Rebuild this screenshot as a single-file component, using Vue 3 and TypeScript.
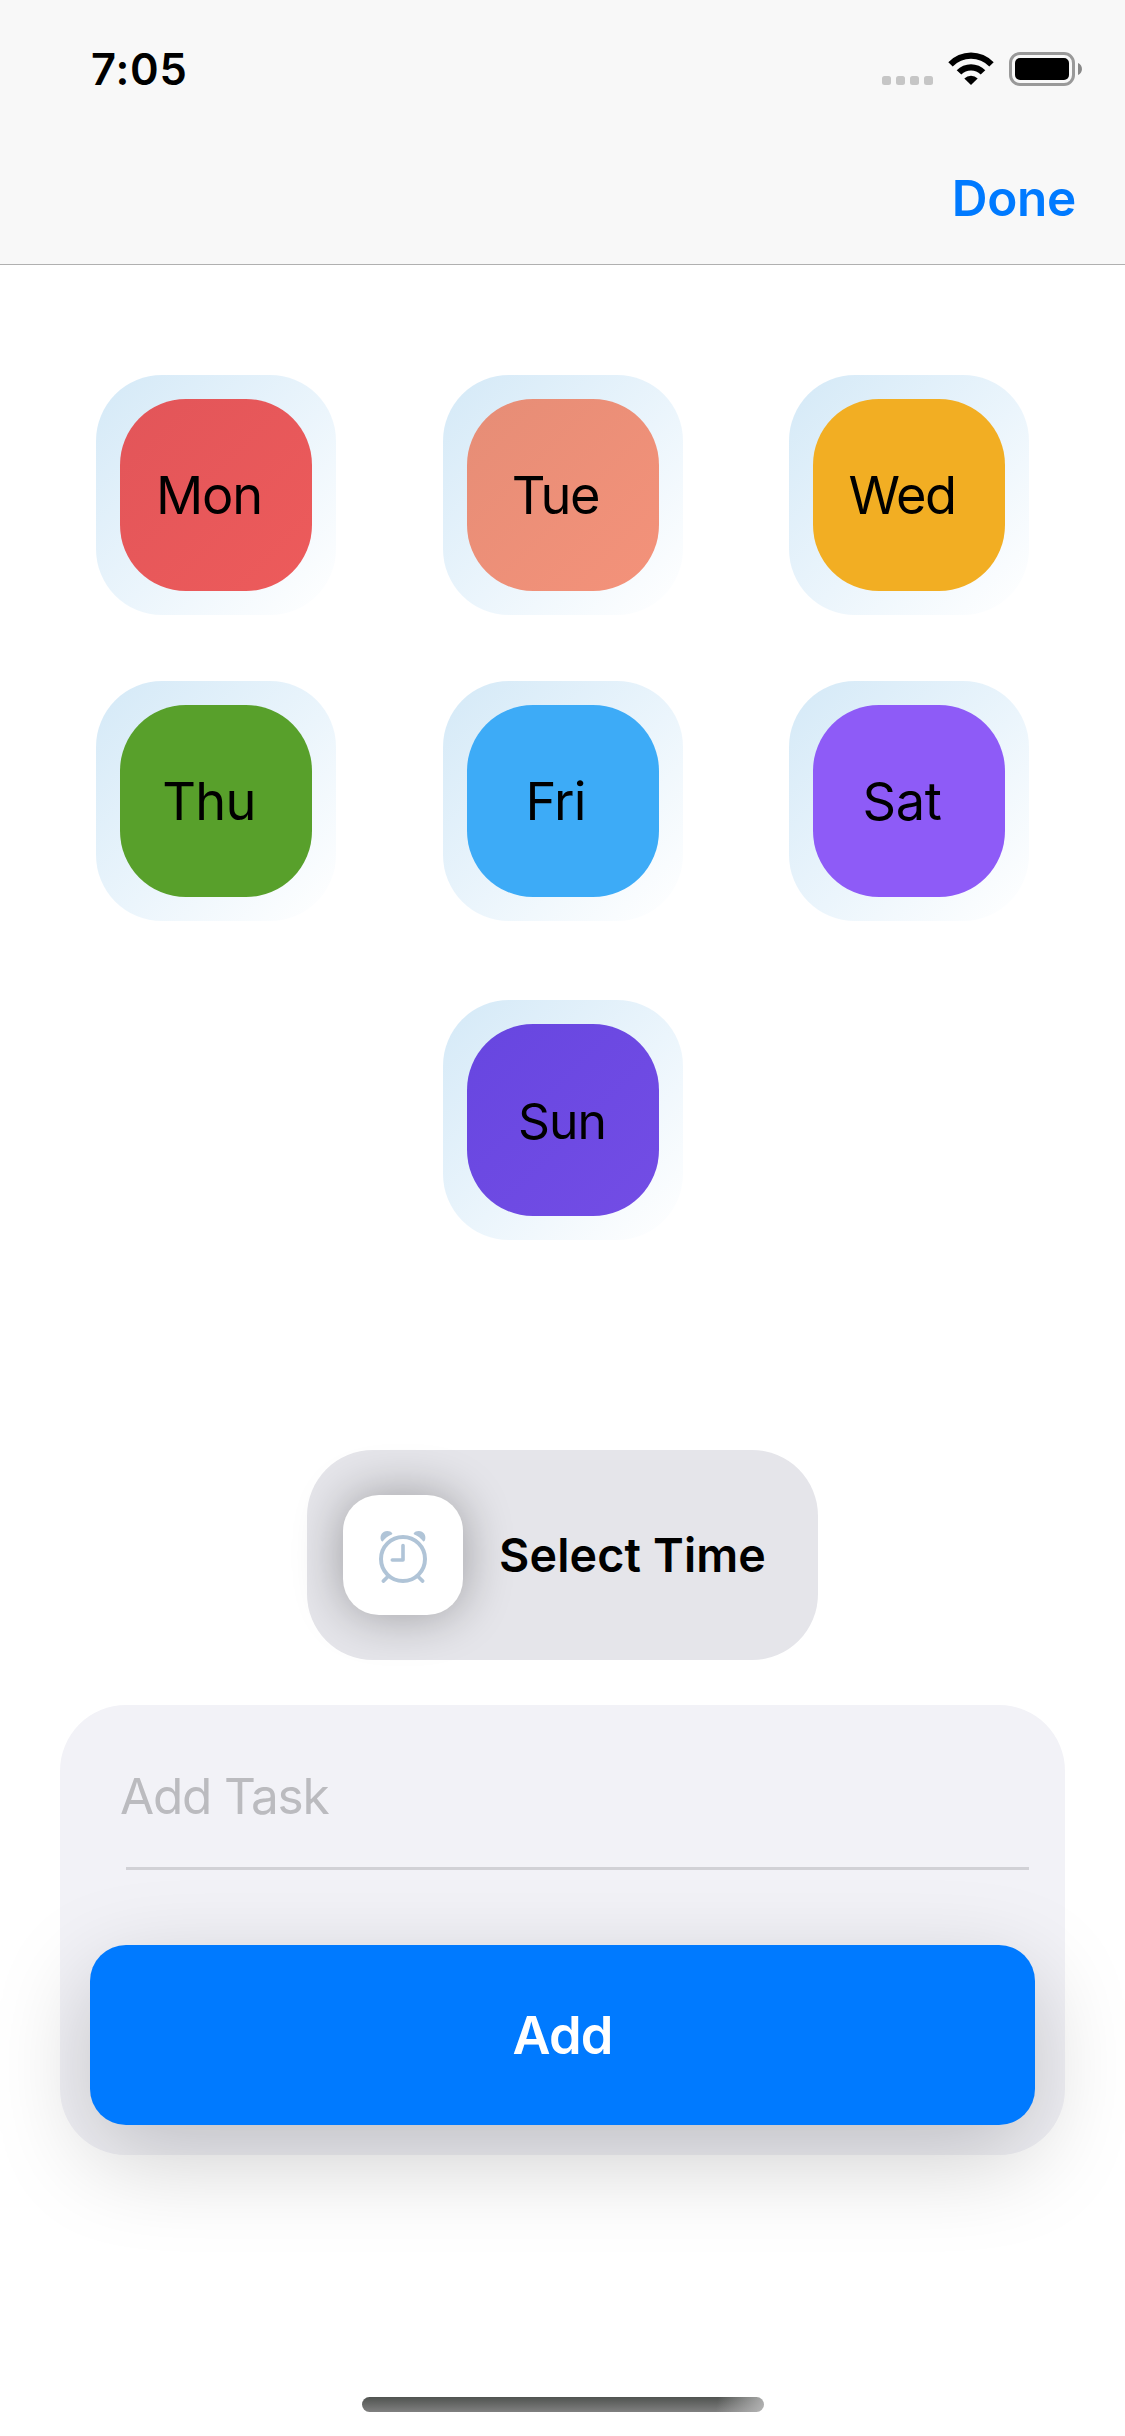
<script setup lang="ts">
interface Day {
  label: string
  from: string
  to: string
  tracking: number
}

const weekRows: Day[][] = [
  [
    { label: 'Mon', from: '#e25559', to: '#ed5b5b', tracking: -1.1 },
    { label: 'Tue', from: '#e68d76', to: '#f4927a', tracking: -1.3 },
    { label: 'Wed', from: '#f2ae23', to: '#f2ae23', tracking: -1.4 },
  ],
  [
    { label: 'Thu', from: '#58a02b', to: '#58a02b', tracking: -0.7 },
    { label: 'Fri', from: '#3dabf7', to: '#3dabf7', tracking: -0.8 },
    { label: 'Sat', from: '#8e5bf7', to: '#8e5bf7', tracking: -0.4 },
  ],
]
const sunday: Day = { label: 'Sun', from: '#6746e0', to: '#734de5', tracking: -1 }

const tileStyle = (d: Day) => ({
  backgroundImage: `linear-gradient(135deg, ${d.from}, ${d.to})`,
  letterSpacing: `${d.tracking}px`,
})
</script>

<template>
  <div class="screen">
    <header class="nav">
      <div class="status">
        <span class="time">7:05</span>
        <div class="indicators">
          <div class="cell"><i v-for="n in 4" :key="n" /></div>
          <svg class="wifi" width="46" height="33" viewBox="0 0 46 33">
            <path d="M.3 10.3A31 31 0 0 1 45.7 10.3L41.3 14.5A25.5 25.5 0 0 0 4.7 14.5Z" />
            <path d="M8.7 18.2A20 20 0 0 1 37.3 18.2L32.7 22.5A14 14 0 0 0 13.3 22.5Z" />
            <path d="M16.3 26.6A9.5 9.5 0 0 1 29.7 26.6L23 33Z" />
          </svg>
          <svg class="battery" width="74" height="34" viewBox="0 0 74 34">
            <rect x="1.5" y="1.5" width="63" height="31" rx="9.5" fill="none" stroke="#999" stroke-width="3" />
            <rect x="6" y="6" width="54" height="22" rx="5" />
            <path d="M69 11C74.3 13 74.3 21 69 23Z" fill="#888" />
          </svg>
        </div>
      </div>
      <div class="actions"><a class="done">Done</a></div>
    </header>

    <main>
      <section class="days">
        <div v-for="(row, r) in weekRows" :key="r" class="row">
          <div v-for="d in row" :key="d.label" class="halo">
            <div class="tile shifted" :style="tileStyle(d)">{{ d.label }}</div>
          </div>
        </div>
        <div class="row single">
          <div class="halo">
            <div class="tile small" :style="tileStyle(sunday)">{{ sunday.label }}</div>
          </div>
        </div>
      </section>

      <div class="picker">
        <div class="clock">
          <svg width="120" height="120" viewBox="0 0 120 120" fill="none" stroke="#b0c4d7" stroke-linecap="round" stroke-linejoin="round">
            <circle cx="60" cy="64" r="22" stroke-width="4" />
            <path d="M60 50.5V65H49.3" stroke-width="3.6" />
            <path d="M45 81.5L40.3 86.1M75 81.5L79.7 86.1" stroke-width="3.6" />
            <g fill="#b0c4d7" stroke="none">
              <path d="M39.6 46.4Q38.6 46.7 38 45.3C36.4 40.5 39.4 36 44.3 36C46.5 36 48.3 36.9 49.2 38.2Q49.7 39 48.7 39.5C45 41 42.3 43.2 39.6 46.4Z" />
              <path d="M80.4 46.4Q81.4 46.7 82 45.3C83.6 40.5 80.6 36 75.7 36C73.5 36 71.7 36.9 70.8 38.2Q70.3 39 71.3 39.5C75 41 77.7 43.2 80.4 46.4Z" />
            </g>
          </svg>
        </div>
        <span class="picker-label">Select Time</span>
      </div>

      <section class="card">
        <div class="field"><span class="placeholder">Add Task</span></div>
        <button class="add"><span>Add</span></button>
      </section>
    </main>

    <footer><div class="home" /></footer>
  </div>
</template>

<style>
body {
  margin: 0;
  background: #fff;
}
</style>

<style scoped>
.screen {
  width: 1125px;
  height: 2436px;
  overflow: hidden;
  display: flex;
  flex-direction: column;
  background: #fff;
  color: #000;
  font-family: Inter, 'Liberation Sans', sans-serif;
}
.nav {
  box-sizing: border-box;
  height: 265px;
  background: #f8f8f8;
  border-bottom: 1px solid #b0b0b0;
}
.status {
  height: 138px;
  display: flex;
  justify-content: space-between;
  align-items: center;
  padding: 0 42px 0 91px;
}
.time {
  font-size: 43.5px;
  font-weight: 600;
  letter-spacing: 0.8px;
}
.indicators {
  display: flex;
  align-items: flex-end;
}
.cell {
  display: flex;
  gap: 5px;
  margin-bottom: 1px;
}
.cell i {
  width: 9px;
  height: 9px;
  border-radius: 2.5px;
  background: #c6c6c6;
}
.wifi {
  margin: 0 15px 1px;
}
.battery {
  display: block;
}
.actions {
  height: 120px;
  display: flex;
  align-items: center;
  justify-content: flex-end;
  padding-right: 49px;
}
.done {
  font-size: 49.5px;
  font-weight: 600;
  letter-spacing: -0.3px;
  color: #007aff;
}
main {
  display: flex;
  flex-direction: column;
  align-items: center;
}
.days {
  width: 933px;
  padding-top: 110px;
}
.row {
  display: flex;
  justify-content: space-between;
  margin-bottom: 66px;
}
.row.single {
  justify-content: center;
  margin: 79px 0 0;
}
.halo {
  width: 240px;
  height: 240px;
  box-sizing: border-box;
  padding: 24px;
  border-radius: 66px;
  background: linear-gradient(135deg, #d4e9f7, #ebf5fc 54%, #fff 98%);
}
.tile {
  box-sizing: border-box;
  width: 192px;
  height: 192px;
  border-radius: 66px;
  display: flex;
  align-items: center;
  justify-content: center;
  font-size: 52.3px;
}
.tile.shifted {
  padding-right: 14px;
}
.tile.small {
  padding: 2px 1px 0 0;
  font-size: 49.8px;
}
.picker {
  box-sizing: border-box;
  width: 511px;
  height: 210px;
  margin-top: 210px;
  padding-left: 36px;
  border-radius: 66px;
  background: #e5e5ea;
  display: flex;
  align-items: center;
  gap: 36px;
}
.clock {
  width: 120px;
  height: 120px;
  border-radius: 36px;
  background: #fff;
  box-shadow: 0 0 50px rgba(0, 0, 0, 0.33);
}
.clock svg {
  display: block;
}
.picker-label {
  font-size: 46.6px;
  font-weight: 600;
  letter-spacing: 0.15px;
  white-space: nowrap;
}
.card {
  box-sizing: border-box;
  width: 1005px;
  height: 450px;
  margin-top: 45px;
  padding: 0 30px 30px;
  border-radius: 66px;
  background: #f2f2f7;
  display: flex;
  flex-direction: column;
  justify-content: space-between;
}
.field {
  box-sizing: border-box;
  height: 165px;
  margin: 0 6px 0 36px;
  padding-top: 20px;
  display: flex;
  align-items: center;
  border-bottom: 3px solid #d1d1d6;
}
.placeholder {
  margin-left: -6px;
  font-size: 49.5px;
  letter-spacing: -1.2px;
  color: #bbbbbf;
}
.add {
  width: 945px;
  height: 180px;
  border: 0;
  padding: 0;
  border-radius: 36px;
  background: #007aff;
  color: #fff;
  font-family: inherit;
  font-size: 52.3px;
  font-weight: 600;
  letter-spacing: -0.8px;
  box-shadow: 0 31px 96px rgba(0, 0, 0, 0.21);
}
footer {
  margin-top: auto;
  padding-bottom: 24px;
  display: flex;
  justify-content: center;
}
.home {
  width: 402px;
  height: 15px;
  border-radius: 7.5px;
  background:
    linear-gradient(100deg, rgba(190, 190, 190, 0) 88%, rgba(190, 190, 190, 0.85) 100%),
    linear-gradient(#505350, #808080);
}
</style>
